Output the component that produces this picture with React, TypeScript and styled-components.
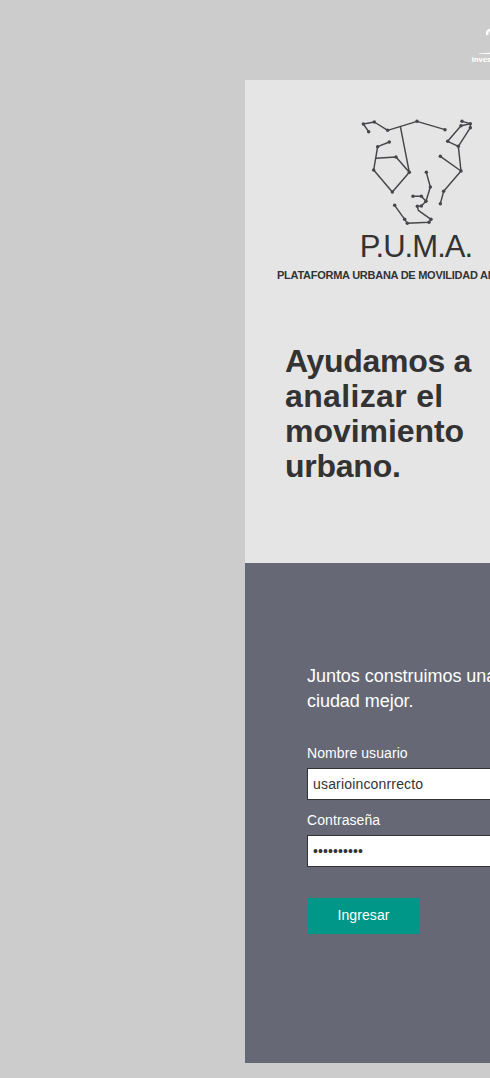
import React from "react";
import styled, { createGlobalStyle } from "styled-components";

const GlobalStyle = createGlobalStyle`
  * { box-sizing: border-box; }
  html, body { margin: 0; background: #cccccc; overflow: hidden; }
  body { font-family: "Liberation Sans", Arial, sans-serif; color: #333333; }
`;

const Page = styled.div`
  width: 490px;
  height: 1078px;
  overflow: hidden;
  background: #cccccc;
`;

const Header = styled.header`
  height: 80px;
  padding: 25px 0 0 471px;
`;

const Sponsor = styled.div`
  width: 90px;
  color: #ffffff;
  font: bold 7.5px/9px "Open Sans", "Liberation Sans", sans-serif;

  svg { display: block; }
  span { display: block; margin: 1px 0 0 0.5px; white-space: nowrap; letter-spacing: -0.15px; }
`;

const Card = styled.main`
  width: 350px;
  margin-left: 245px;
`;

const Intro = styled.section`
  height: 483px;
  background: #e5e5e5;
  display: flex;
  flex-direction: column;
  align-items: center;
  padding-top: 30px;
`;

const Puma = styled.svg`
  display: block;
  width: 140px;
  height: 120px;
  flex: none;
`;

const Brand = styled.div`
  font-size: 31px;
  line-height: 36px;
  letter-spacing: -0.95px;
  margin-top: -1px;
  padding-right: 8px;
`;

const Tagline = styled.div`
  align-self: flex-start;
  margin: 3px 0 0 32px;
  font-size: 11px;
  line-height: 14px;
  font-weight: bold;
  letter-spacing: -0.26px;
  white-space: nowrap;
`;

const Headline = styled.h1`
  align-self: flex-start;
  margin: 62px 0 0 40px;
  font-size: 32px;
  line-height: 35px;
  font-weight: bold;
`;

const HeadlineRow = styled.span<{ $tracking: number }>`
  display: block;
  white-space: nowrap;
  letter-spacing: ${(p) => p.$tracking}px;
`;

const Login = styled.form`
  height: 500px;
  padding: 101px 30px 0 62px;
  background: #666876;
  color: #ffffff;
`;

const Lead = styled.p`
  margin: 0 0 29px;
  width: 200px;
  font-size: 18px;
  line-height: 25px;
  letter-spacing: -0.04px;
`;

const Field = styled.label`
  display: block;
  margin-bottom: 10px;
  font-size: 14px;
  line-height: 20px;
  letter-spacing: 0.08px;
`;

const Input = styled.input`
  display: block;
  width: 220px;
  height: 32px;
  margin-top: 5px;
  padding: 0 5px;
  border: 1px solid #333333;
  border-radius: 0;
  background: #ffffff;
  color: #333333;
  font: 14px "Liberation Sans", Arial, sans-serif;
  letter-spacing: 0.17px;
  outline: none;

  &[type="password"] { letter-spacing: 0.1px; }
`;

const Submit = styled.button`
  display: block;
  width: 113px;
  height: 36px;
  margin-top: 31px;
  padding: 0 0 2px;
  border: 0;
  border-radius: 2px;
  background: #009688;
  color: #ffffff;
  font: 14px "Liberation Sans", Arial, sans-serif;
  letter-spacing: 0.1px;
`;

type Point = [number, number];

const strokes: Point[][] = [
  [[56, 65], [40, 42], [73, 36], [113, 61], [201, 34], [285, 59]],
  [[151, 49], [178, 187], [138, 141], [78, 145]],
  [[118, 96], [83, 110], [71, 180], [127, 246], [178, 187]],
  [[336, 34], [361, 41], [333, 47], [293, 94], [325, 109], [361, 53], [361, 41]],
  [[325, 109], [333, 183], [271, 139]],
  [[333, 183], [281, 244], [271, 281]],
  [[229, 187], [241, 231], [228, 274], [214, 259], [189, 259]],
  [[228, 274], [214, 288], [202, 289], [205, 301], [243, 328], [237, 337], [172, 340], [164, 328], [134, 286]],
];

const joints: Point[] = [
  [56, 65], [40, 42], [73, 36], [113, 61], [201, 34], [285, 59],
  [178, 187], [138, 141], [118, 96], [83, 110], [71, 180], [127, 246],
  [336, 34], [361, 41], [333, 47], [293, 94], [325, 109], [361, 53],
  [333, 183], [271, 139], [281, 244], [271, 281],
  [229, 187], [241, 231], [228, 274], [214, 259], [189, 259],
  [214, 288], [202, 289], [243, 328], [237, 337], [172, 340], [164, 328], [134, 286],
];

export default function App() {
  return (
    <Page>
      <GlobalStyle />
      <Header>
        <Sponsor>
          <svg width="60" height="29" viewBox="0 0 60 29">
            <path d="M16.4 10C15.4 6.7 17.2 4.6 21 4.6" fill="none" stroke="#fff" strokeWidth="2.6" />
            <path d="M8 28.6L20 27.8L45 27.8V29H8Z" fill="#fff" />
          </svg>
          <span>Investigación</span>
        </Sponsor>
      </Header>
      <Card>
        <Intro>
          <Puma viewBox="0 0 420 360" aria-label="Puma">
            <g fill="none" stroke="#47474b" strokeWidth="4.4" strokeLinejoin="round">
              {strokes.map((s, i) => <polyline key={i} points={s.join(" ")} />)}
            </g>
            <g fill="#47474b">
              {joints.map(([x, y], i) => <circle key={i} cx={x} cy={y} r="5.2" />)}
            </g>
          </Puma>
          <Brand>P.U.M.A.</Brand>
          <Tagline>PLATAFORMA URBANA DE MOVILIDAD ANALÍTICA</Tagline>
          <Headline>
            <HeadlineRow $tracking={-0.3}>Ayudamos a </HeadlineRow>
            <HeadlineRow $tracking={0.35}>analizar el </HeadlineRow>
            <HeadlineRow $tracking={-0.05}>movimiento </HeadlineRow>
            <HeadlineRow $tracking={-0.25}>urbano.</HeadlineRow>
          </Headline>
        </Intro>
        <Login onSubmit={(e) => e.preventDefault()}>
          <Lead>Juntos construimos una ciudad mejor.</Lead>
          <Field>
            Nombre usuario
            <Input type="text" defaultValue="usarioinconrrecto" spellCheck={false} />
          </Field>
          <Field>
            Contraseña
            <Input type="password" defaultValue="contrasena" />
          </Field>
          <Submit type="submit">Ingresar</Submit>
        </Login>
      </Card>
    </Page>
  );
}
